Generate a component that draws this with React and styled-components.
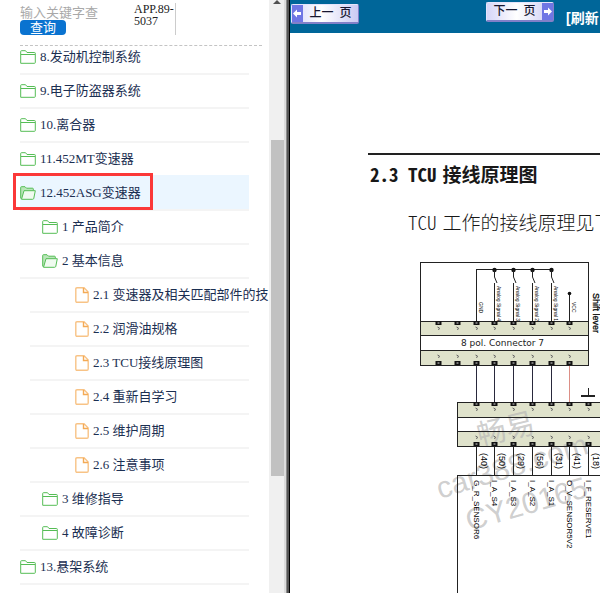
import React from "react";
import styled, { createGlobalStyle } from "styled-components";

const GlobalStyle = createGlobalStyle`
  * { box-sizing: border-box; }
  body { margin: 0; background: #fff; overflow-x: hidden; }
`;

const Page = styled.div`
  display: flex;
  min-height: 100vh;
  overflow: hidden;
  font-family: "Liberation Serif", "Noto Sans CJK SC", serif;
`;

const Sidebar = styled.aside`
  flex: 0 0 269px;
  overflow: hidden;
  padding-left: 20px;
`;

const Header = styled.header`
  display: flex;
  height: 46px;
  margin-right: 7px;
  border-bottom: 1px dashed #c4c4c4;
`;

const SearchForm = styled.form`
  width: 114px;
  display: flex;
  flex-direction: column;
  align-items: flex-start;
  padding-top: 5px;
`;

const SearchInput = styled.input`
  width: 80px;
  height: 15px;
  padding: 0;
  border: 0;
  outline: 0;
  background: transparent;
  font: 13px/15px "Liberation Sans", "Noto Sans CJK SC", sans-serif;
  &::placeholder { color: #a9a9a9; opacity: 1; }
`;

const SearchButton = styled.button`
  width: 46px;
  height: 15px;
  padding: 0;
  border: 0;
  border-radius: 4px;
  background: #0a73d0;
  color: #fff;
  font: 13px/14px "Liberation Sans", "Noto Sans CJK SC", sans-serif;
`;

const PartCode = styled.div`
  width: 42px;
  height: 32px;
  margin-top: 3px;
  border-right: 1px solid #ccc;
  font-size: 12px;
  line-height: 12px;
  color: #222;
`;

const Tree = styled.ul`
  list-style: none;
  margin: -5px 0 0;
  padding: 0 20px 0 0;
`;

const indents = [0, 22, 45];

const TreeItem = styled.li`
  height: 34px;
  margin-left: ${(p) => (p.$level === 2 ? 10 : 0)}px;
  padding-left: ${(p) => indents[p.$level]}px;
  border-bottom: 2px solid #f4f4f4;
  background: ${(p) => (p.$active ? "#ebf6ff" : "transparent")};
  box-shadow: ${(p) => (p.$active ? "0 -2px 0 #ebf6ff" : "none")};
`;

const TreeLink = styled.a`
  position: relative;
  display: inline-flex;
  align-items: center;
  gap: 4px;
  height: 32px;
  font-size: 13px;
  line-height: 20px;
  color: #1b2f52;
  white-space: nowrap;
  text-decoration: none;
  svg { flex: none; }
`;

const Marker = styled.span`
  position: absolute;
  inset: -4px -12px -1px -7px;
  border: 3px solid #fb3838;
  pointer-events: none;
`;

const ScrollTrack = styled.div`
  flex: 0 0 15px;
  display: flex;
  flex-direction: column;
  align-items: center;
  background: #f0f0f0;
`;

const ScrollThumb = styled.div`
  width: 13px;
  height: 336px;
  margin-top: 136px;
  margin-left: 2px;
  background: #c1c1c1;
`;

const Divider = styled.div`
  flex: 0 0 6px;
  border: solid;
  border-width: 0 1px 0 2px;
  border-color: #000 #000 #000 #dcdcdc;
  background: linear-gradient(90deg, #8c8c8c 0 1px, #555 1px);
`;

const Main = styled.main`
  flex: 1 1 0;
  min-width: 0;
  overflow: hidden;
`;

const Toolbar = styled.div`
  display: flex;
  align-items: flex-start;
  height: 33px;
  padding: 2px 0 0 1px;
  background: #069;
`;

const PageButton = styled.button`
  flex: none;
  display: flex;
  flex-direction: ${(p) => (p.$next ? "row-reverse" : "row")};
  width: 68px;
  height: 20px;
  margin: ${(p) => (p.$next ? "0 0 0 127px" : "2px 0 0")};
  padding: 0;
  border: 1px solid #e4e4fc;
  border-bottom: 2px solid #8280c8;
  border-right-color: #8280c8;
  border-radius: 2px;
  background: linear-gradient(90deg, #d6d6f8, #fff 45%, #cacaf3);
  color: #161630;
  font: 12px/17px "Liberation Sans", "Noto Sans CJK SC", sans-serif;
  svg { flex: none; }
`;

const ButtonLabel = styled.span`
  flex: 1;
  display: flex;
  justify-content: center;
  gap: 6px;
  font-weight: 500;
`;

const RefreshLink = styled.a`
  flex: none;
  margin: 6px 0 0 12px;
  color: #fff;
  font: bold 14px/20px "Liberation Sans", "Noto Sans CJK SC", sans-serif;
  text-decoration: none;
  white-space: nowrap;
`;

const Document = styled.article`
  margin: 120px 0 0 78px;
  border-top: 2px solid #222;
  color: #181818;
  font-family: "Noto Sans CJK SC", sans-serif;
  font-size: 19px;
  font-feature-settings: "hwid";
  white-space: nowrap;
`;

const Heading = styled.h2`
  display: flex;
  gap: 6px;
  margin: 5px 0 0 2px;
  font-size: inherit;
  line-height: 28px;
  font-weight: 700;
`;

const Paragraph = styled.p`
  display: flex;
  gap: 6px;
  margin: 20px 0 0 40px;
  line-height: 28px;
  font-weight: 300;
`;

const Diagram = styled.svg`
  display: block;
  margin-top: 4px;
  font-family: "Liberation Sans", "Noto Sans CJK SC", sans-serif;
  font-feature-settings: normal;
`;

function FolderIcon({ open }) {
  return (
    <svg width="16" height="14" viewBox="0 0 16 14" fill="none" stroke="#55bd55" aria-hidden="true">
      {open ? (
        <>
          <path d="M1.500 13 .7 12V1.500Q.7.700 1.500.700H5L6.500 2.200H12.500Q13.300 2.200 13.300 3V4.500" fill="#b9e6b9" />
          <path d="M4 4.700H15.300L13.800 12.300Q13.600 13.300 12.600 13.300H1.500Z" fill="#f0fbf0" />
        </>
      ) : (
        <>
          <path d="M.7 13.300V1.500Q.7.700 1.500.700H5.500L7 2.500H14.500Q15.300 2.500 15.300 3.300V12.500Q15.300 13.300 14.500 13.300Z" fill="#fff" />
          <path d="M1 4.500H15" />
        </>
      )}
    </svg>
  );
}

function FileIcon() {
  return (
    <svg width="14" height="16" viewBox="0 0 14 16" fill="none" stroke="#f8c386" strokeWidth="1.4" aria-hidden="true">
      <path d="M2 .8H9L13.200 5V14Q13.200 15.200 12 15.200H2Q.8 15.200.8 14V2Q.8.800 2 .8Z" />
      <path d="M8.500 1V5.500H13" stroke="#f4aa55" />
    </svg>
  );
}

function ArrowBlock({ next }) {
  return (
    <svg width="11" height="17" viewBox="0 0 11 17" aria-hidden="true">
      <path d="M0 0H11V17H0Z" fill="#6f76e4" />
      <path d={next ? "M10 8.500 6 4.500V7H2V10H6V12.500Z" : "M1 8.500 5 4.500V7H9V10H5V12.500Z"} fill="#fff" />
    </svg>
  );
}

const items = [
  { level: 0, text: "8.发动机控制系统" },
  { level: 0, text: "9.电子防盗器系统" },
  { level: 0, text: "10.离合器" },
  { level: 0, text: "11.452MT变速器" },
  { level: 0, text: "12.452ASG变速器", open: true, active: true },
  { level: 1, text: "1 产品简介" },
  { level: 1, text: "2 基本信息", open: true },
  { level: 2, text: "2.1 变速器及相关匹配部件的技" },
  { level: 2, text: "2.2 润滑油规格" },
  { level: 2, text: "2.3 TCU接线原理图" },
  { level: 2, text: "2.4 重新自学习" },
  { level: 2, text: "2.5 维护周期" },
  { level: 2, text: "2.6 注意事项" },
  { level: 1, text: "3 维修指导" },
  { level: 1, text: "4 故障诊断" },
  { level: 0, text: "13.悬架系统" },
];

const pins = [438, 457, 476, 494, 513, 532, 551, 569];
const lowerPins = [476, 494, 513, 532, 551, 569, 588];
const signals = [
  [494, "Analog Signal 4"],
  [513, "Analog Signal 3"],
  [532, "Analog Signal 2"],
  [551, "Analog Signal 1"],
];
const wireNumbers = ["(40)", "(50)", "(29)", "(56)", "(31)", "(41)", "(18)"];
const wireNames = ["G_R_SENSOR6", "I_A_S4", "I_A_S3", "I_A_S2", "I_A_S1", "O_V_SENSOR5V2", "I_F_RESERVE1"];

function Vertical({ x, y, size, children, ...rest }) {
  return (
    <text transform={`translate(${x} ${y}) rotate(90)`} fontSize={size} {...rest}>
      {children}
    </text>
  );
}

function Pin({ x, y, below }) {
  return (
    <g>
      <path d={`M${x - 3} ${y}h6v4h-6z`} fill="#111" />
      <path d={`M${x - 1} ${y + 1}h2v2h-2z`} fill="#777" />
      <path d={`M${x - 1} ${below ? y + 6 : y - 6}l2 1-1 2`} stroke="#666" fill="none" />
    </g>
  );
}

function WiringDiagram() {
  return (
    <Diagram width="232" height="353" viewBox="368 240 232 353" role="img" aria-label="TCU 接线原理图">
      <g fill="#dfe2cb">
        <path d="M420 321H588V336H420ZM420 351H588V366H420ZM457 403H600V418H457ZM457 432H600V446H457Z" />
      </g>
      <g fill="#b4b4b4" fillOpacity=".65">
        <text transform="translate(480 446) rotate(-14)" fontSize="29">畅易</text>
        <text transform="translate(440 499) rotate(-17)" fontSize="30">car388.com</text>
        <text transform="translate(469 531) rotate(-16)" fontSize="30">CY20165</text>
      </g>
      <g fill="none" stroke="#222" strokeWidth="1" shapeRendering="crispEdges">
        <path d="M420.500 262.500H588.500V365.500H420.500ZM420 321.500H588M420 335.500H588M420 350.500H588" />
        <path d="M600 402.500H457.500V446.500H600M457 417.500H600M457 431.500H600" />
        <path d="M476.500 321V269.500H551" />
        <path d="M569.500 293V321M588.500 388V396" />
        <path d="M581 396H595" strokeWidth="2" />
        <path d="M600 475.500H457.500V593" />
        {lowerPins.map((x) => <path key={x} d={`M${x}.5 446V475`} />)}
        {lowerPins.slice(0, 5).map((x) => <path key={x} d={`M${x}.5 366V402`} stroke="#29293c" />)}
        <path d="M569.500 366V402" stroke="#dc8f86" />
      </g>
      {signals.map(([x, label]) => (
        <g key={x}>
          <circle cx={x + 0.5} cy="270" r="2.200" fill="#111" />
          <path d={`M${x}.5 270V277L${x + 3} 283M${x}.5 283V321`} fill="none" stroke="#222" />
          <Vertical x={x + 3} y={286} size="5">{label}</Vertical>
        </g>
      ))}
      <circle cx="569.500" cy="293.500" r="1.800" fill="#111" />
      <Vertical x={479} y={302} size="5">GND</Vertical>
      <Vertical x={572} y={302} size="5">VCC</Vertical>
      <Vertical x={593} y={293} size="9" stroke="#111" strokeWidth=".3">Shift lever</Vertical>
      {pins.map((x) => (
        <g key={x}>
          <Pin x={x + 0.5} y={321} below />
          <Pin x={x + 0.5} y={361} />
        </g>
      ))}
      {lowerPins.map((x, i) => (
        <g key={x}>
          <Pin x={x + 0.5} y={402} below />
          <Pin x={x + 0.5} y={442} />
          <Vertical x={x + 5} y={453} size="9">{wireNumbers[i]}</Vertical>
          <Vertical x={x - 2} y={480} size="8">{wireNames[i]}</Vertical>
        </g>
      ))}
      <text x="461" y="346" fontSize="9" fontFamily="DejaVu Sans, sans-serif" fill="#222">8 pol. Connector 7</text>
    </Diagram>
  );
}

export default function App() {
  return (
    <Page>
      <GlobalStyle />
      <Sidebar>
        <Header>
          <SearchForm onSubmit={(e) => e.preventDefault()}>
            <SearchInput aria-label="输入关键字查询" placeholder="输入关键字查" />
            <SearchButton type="submit">查询</SearchButton>
          </SearchForm>
          <PartCode>APP.89-5037</PartCode>
        </Header>
        <Tree>
          {items.map((item) => (
            <TreeItem key={item.text} $level={item.level} $active={item.active}>
              <TreeLink href="#">
                {item.level === 2 ? <FileIcon /> : <FolderIcon open={item.open} />}
                {item.text}
                {item.active && <Marker />}
              </TreeLink>
            </TreeItem>
          ))}
        </Tree>
      </Sidebar>
      <ScrollTrack>
        <svg width="8" height="4" viewBox="0 0 8 4" aria-hidden="true">
          <path d="M4 0 8 4H0Z" fill="#505050" />
        </svg>
        <ScrollThumb />
      </ScrollTrack>
      <Divider />
      <Main>
        <Toolbar>
          <PageButton type="button">
            <ArrowBlock />
            <ButtonLabel><span>上一</span><span>页</span></ButtonLabel>
          </PageButton>
          <PageButton type="button" $next>
            <ArrowBlock next />
            <ButtonLabel><span>下一</span><span>页</span></ButtonLabel>
          </PageButton>
          <RefreshLink href="#">[刷新</RefreshLink>
        </Toolbar>
        <Document>
          <Heading><span>2.3 TCU</span><span>接线原理图</span></Heading>
          <Paragraph><span>TCU</span><span>工作的接线原理见下</span></Paragraph>
          <WiringDiagram />
        </Document>
      </Main>
    </Page>
  );
}
